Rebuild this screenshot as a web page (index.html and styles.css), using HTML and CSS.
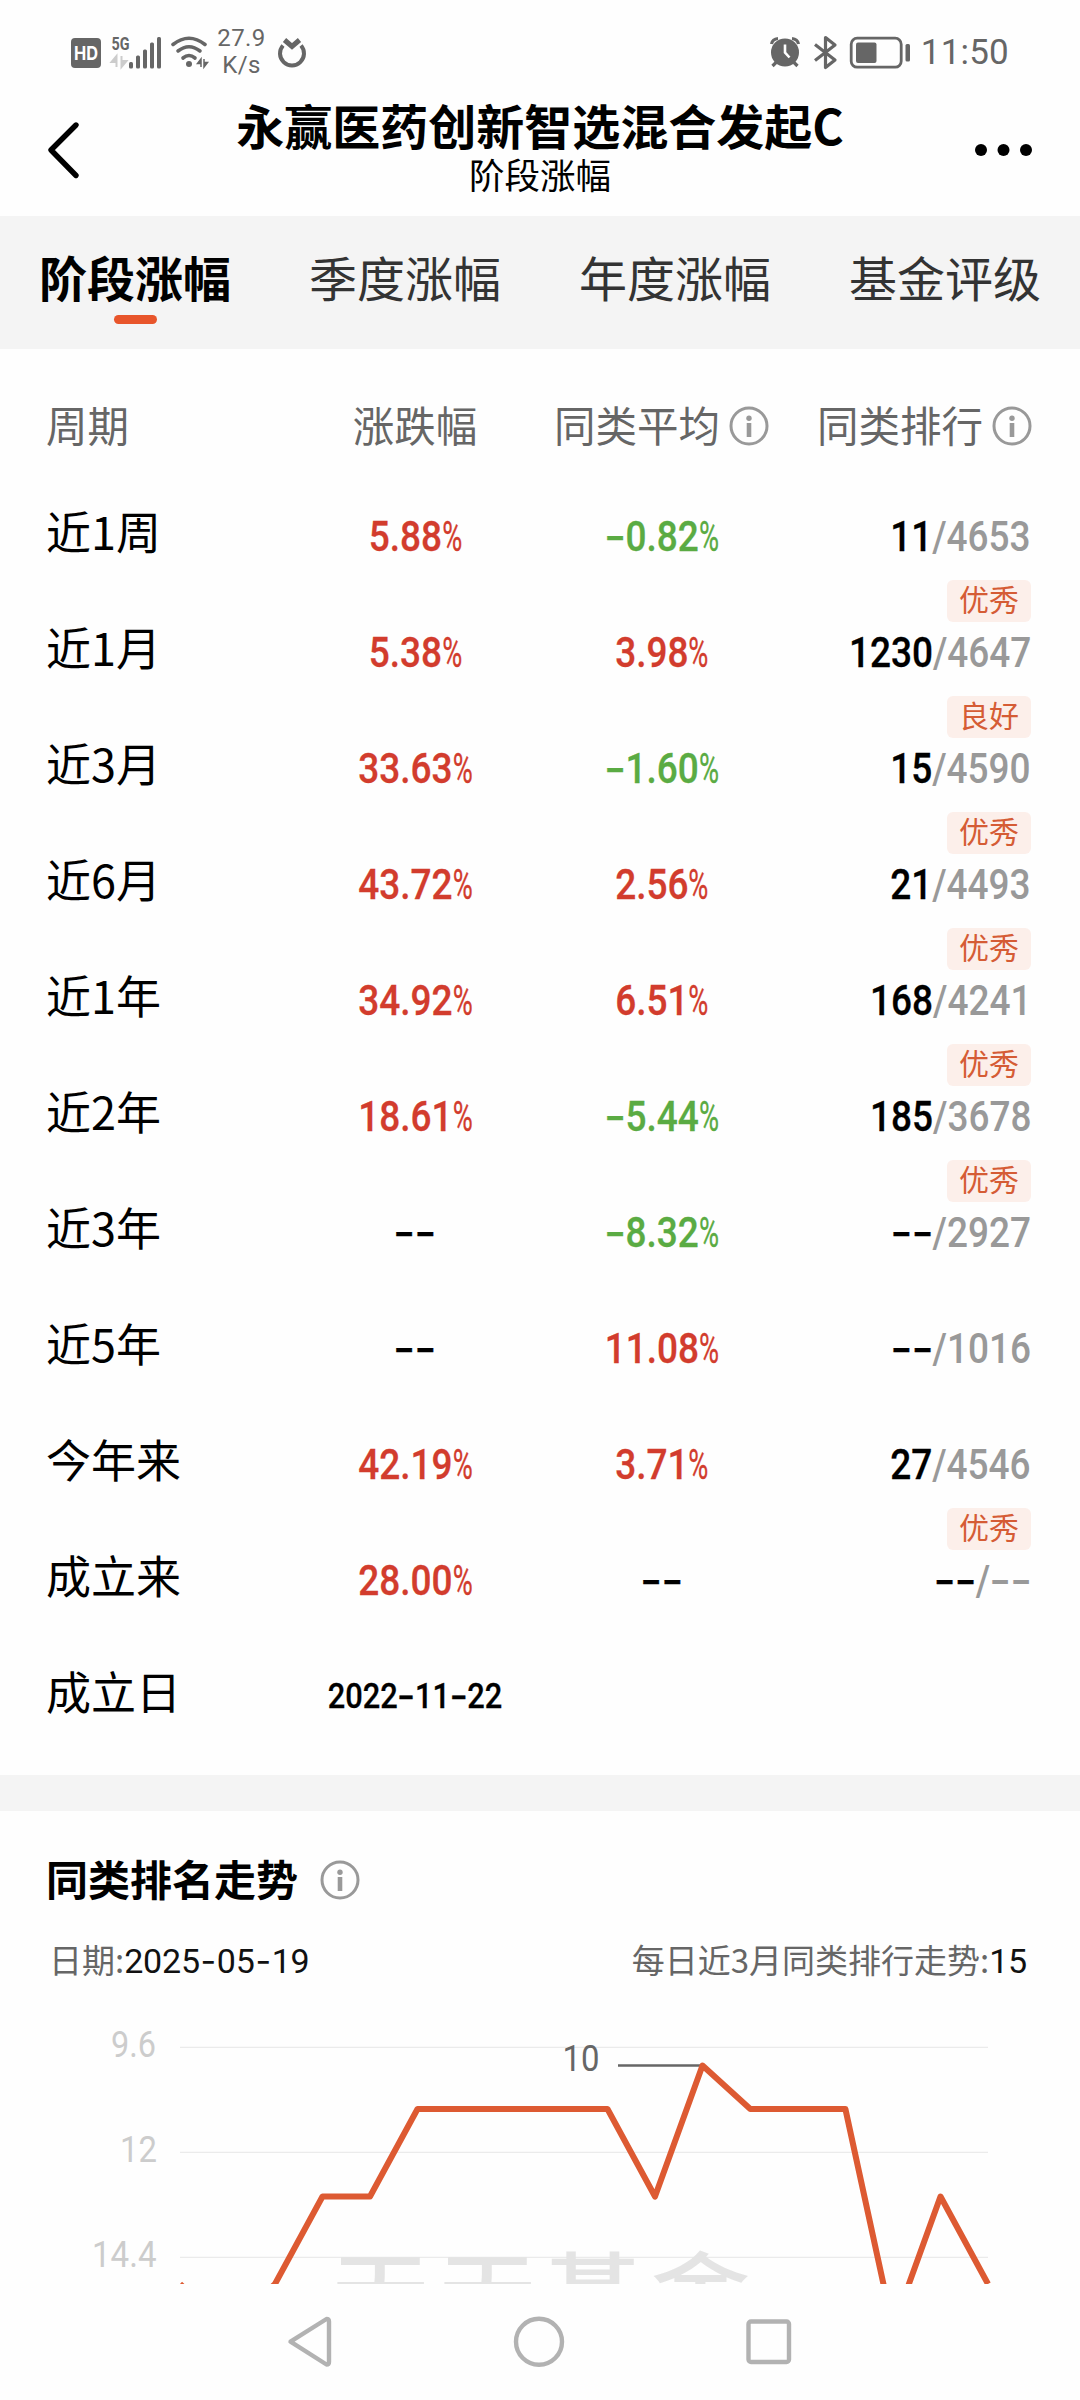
FILE: index.html
```html
<!DOCTYPE html>
<html lang="zh-CN">
<head>
<meta charset="utf-8">
<title>阶段涨幅</title>
<link rel="stylesheet" href="styles.css">
</head>
<body>
<svg class="defs" width="0" height="0" aria-hidden="true">
  <symbol id="info" viewBox="0 0 40 40">
    <circle cx="20" cy="20" r="18" fill="none" stroke="#999" stroke-width="3"/>
    <circle cx="20" cy="12.3" r="2.7" fill="#999"/>
    <path d="M20 17v14" stroke="#999" stroke-width="4.6"/>
  </symbol>
</svg>

<div class="status">
  <div class="status-left">
    <svg width="140" height="44" viewBox="70 30 140 44" fill="#666">
      <rect x="71" y="38" width="30" height="30" rx="4"/>
      <text class="hd" x="86" y="60" text-anchor="middle" textLength="24" lengthAdjust="spacingAndGlyphs">HD</text>
      <text class="g5" x="111.5" y="50" textLength="18" lengthAdjust="spacingAndGlyphs">5G</text>
      <path d="M116.500 67V56l-5 6h5M121.500 56v11l5-6h-5" fill="#ccc" stroke="#ccc" stroke-width="2"/>
      <rect x="129" y="62" width="4" height="6.500" rx="1.500"/>
      <rect x="136" y="55.500" width="4" height="13" rx="1.500"/>
      <rect x="143" y="49.500" width="4" height="19" rx="1.500"/>
      <rect x="150" y="42.500" width="4" height="26" rx="1.500"/>
      <rect x="157" y="37" width="4" height="31.500" rx="1.500"/>
      <g fill="none" stroke="#666" stroke-width="3.600" stroke-linecap="round">
        <path d="M173 44.500q16-12.500 32 0"/>
        <path d="M178 51q11-8.500 22 0"/>
        <path d="M183 58q6-5 12 0"/>
      </g>
      <circle cx="189" cy="64" r="3"/>
      <path d="M201 67v-8l-3.500 4.500h3.500M204 59v8l3.500-4.500h-3.500" stroke="#666" stroke-width="1.500"/>
    </svg>
    <div class="speed"><span>27.9</span><span>K/s</span></div>
    <svg width="30" height="44" viewBox="277 30 30 44" fill="none" stroke="#666" stroke-width="4">
      <path d="M283 45.500a12 12 0 1 0 18 0"/>
      <path d="M284.500 40l7.500 6.500 7.500-6.500" stroke-width="5"/>
    </svg>
  </div>
  <div class="status-right">
    <svg width="142" height="44" viewBox="768 30 142 44" fill="none" stroke="#666">
      <circle cx="784" cy="52.500" r="14" fill="#666" stroke="none"/>
      <path d="M770.500 44q1-5 6.500-5.500M797.500 44q-1-5-6.500-5.500M775.500 62l-4 4M792.500 62l4 4" stroke-width="3.200"/>
      <path d="M784 44.500v8l4.500 5" stroke="#fff" stroke-width="2.600"/>
      <path d="M814 44.500l20 15.500-9.500 7.500V37.500l9.500 7.500-20 15.500" stroke-width="3.200" stroke-linejoin="round"/>
      <rect x="850.200" y="38.200" width="50" height="29" rx="6" stroke-width="2.800"/>
      <rect x="855" y="42.500" width="20.500" height="20.500" rx="2" fill="#666" stroke="none"/>
      <rect x="904.500" y="44" width="4.500" height="17.500" rx="1.500" fill="#666" stroke="none"/>
    </svg>
    <span class="clock">11:50</span>
  </div>
</div>

<header class="header">
  <svg width="36" height="64" viewBox="46 118 36 64" fill="none" stroke="#000" stroke-width="5.400" stroke-linecap="round" stroke-linejoin="round"><path d="M76 125L51 150l25 25.500"/></svg>
  <div class="titles">
    <h1>永赢医药创新智选混合发起C</h1>
    <p>阶段涨幅</p>
  </div>
  <svg width="60" height="14" viewBox="973 143 60 14"><circle cx="981" cy="150" r="6"/><circle cx="1003.500" cy="150" r="6"/><circle cx="1026" cy="150" r="6"/></svg>
</header>

<nav class="tabs">
  <span class="tab active">阶段涨幅</span>
  <span class="tab">季度涨幅</span>
  <span class="tab">年度涨幅</span>
  <span class="tab">基金评级</span>
</nav>

<section class="table">
  <div class="row head">
    <span>周期</span><span class="mid">涨跌幅</span>
    <span class="mid with-icon">同类平均<svg width="40" height="40"><use href="#info"/></svg></span>
    <span class="end with-icon">同类排行<svg width="40" height="40"><use href="#info"/></svg></span>
  </div>
  <div class="row"><span class="label">近1周</span><span class="num up">5.88<i>%</i></span><span class="num down"><b>-</b>0.82<i>%</i></span><div class="rank"><span class="num">11<em>/4653</em></span><span class="tag">优秀</span></div></div>
  <div class="row"><span class="label">近1月</span><span class="num up">5.38<i>%</i></span><span class="num up">3.98<i>%</i></span><div class="rank"><span class="num">1230<em>/4647</em></span><span class="tag">良好</span></div></div>
  <div class="row"><span class="label">近3月</span><span class="num up">33.63<i>%</i></span><span class="num down"><b>-</b>1.60<i>%</i></span><div class="rank"><span class="num">15<em>/4590</em></span><span class="tag">优秀</span></div></div>
  <div class="row"><span class="label">近6月</span><span class="num up">43.72<i>%</i></span><span class="num up">2.56<i>%</i></span><div class="rank"><span class="num">21<em>/4493</em></span><span class="tag">优秀</span></div></div>
  <div class="row"><span class="label">近1年</span><span class="num up">34.92<i>%</i></span><span class="num up">6.51<i>%</i></span><div class="rank"><span class="num">168<em>/4241</em></span><span class="tag">优秀</span></div></div>
  <div class="row"><span class="label">近2年</span><span class="num up">18.61<i>%</i></span><span class="num down"><b>-</b>5.44<i>%</i></span><div class="rank"><span class="num">185<em>/3678</em></span><span class="tag">优秀</span></div></div>
  <div class="row"><span class="label">近3年</span><span class="num"><b>-</b><b>-</b></span><span class="num down"><b>-</b>8.32<i>%</i></span><div class="rank"><span class="num"><b>-</b><b>-</b><em>/2927</em></span></div></div>
  <div class="row"><span class="label">近5年</span><span class="num"><b>-</b><b>-</b></span><span class="num up">11.08<i>%</i></span><div class="rank"><span class="num"><b>-</b><b>-</b><em>/1016</em></span></div></div>
  <div class="row"><span class="label">今年来</span><span class="num up">42.19<i>%</i></span><span class="num up">3.71<i>%</i></span><div class="rank"><span class="num">27<em>/4546</em></span><span class="tag">优秀</span></div></div>
  <div class="row"><span class="label">成立来</span><span class="num up">28.00<i>%</i></span><span class="num"><b>-</b><b>-</b></span><div class="rank"><span class="num"><b>-</b><b>-</b><em>/<b>-</b><b>-</b></em></span></div></div>
  <div class="row last"><span class="label">成立日</span><span class="num date">2022<b>-</b>11<b>-</b>22</span></div>
</section>

<section class="trend">
  <h2>同类排名走势<svg width="40" height="40"><use href="#info"/></svg></h2>
  <div class="meta">
    <span>日期:<span class="val">2025<b>-</b>05<b>-</b>19</span></span>
    <span>每日近3月同类排行走势:<span class="val">15</span></span>
  </div>
  <svg class="chart" width="1080" height="284" viewBox="0 2000 1080 284">
    <path d="M180 2047.300H988M180 2152.300H988M180 2257.300H988" stroke="#ebebeb" stroke-width="1.300"/>
    <g class="mark" transform="translate(331 2319) scale(1.240 1)">
      <text x="0" y="0">天</text><text x="86.300" y="0">天</text><text x="171" y="0">基</text><text x="258" y="0">金</text>
    </g>
    <g class="axis">
      <text x="111" y="2057" textLength="45" lengthAdjust="spacingAndGlyphs">9.6</text>
      <text x="120" y="2162" textLength="37" lengthAdjust="spacingAndGlyphs">12</text>
      <text x="92" y="2267" textLength="64.500" lengthAdjust="spacingAndGlyphs">14.4</text>
      <text class="peak" x="562.500" y="2071" textLength="37" lengthAdjust="spacingAndGlyphs">10</text>
    </g>
    <path d="M618 2065.500H702" stroke="#666" stroke-width="2.600"/>
    <path d="M180 2284L227.500 2328L275 2284L322.500 2196.500H370L417.500 2109H607.500L655 2196.500L702.500 2065.500L750.300 2109H845.400L893 2328L940.500 2196.500L988 2284" fill="none" stroke="#dd5a32" stroke-width="6" stroke-linejoin="round"/>
  </svg>
</section>

<footer class="softkeys">
  <svg width="48" height="54" viewBox="285 2315 48 54"><path d="M289.500 2341.700L325.500 2319q2.500 0 2.500 2.500v40.500q0 2.500-2.500 2.500z"/></svg>
  <svg width="54" height="54" viewBox="513 2315 54 54"><circle cx="540" cy="2341.700" r="23"/></svg>
  <svg width="50" height="54" viewBox="744 2315 50 54"><rect x="748.500" y="2321.500" width="40.500" height="40.500" rx="2.500"/></svg>
</footer>
</body>
</html>
```

FILE: styles.css
```css
* { box-sizing: border-box; }
body {
  margin: 0;
  width: 1080px;
  height: 2400px;
  overflow: hidden;
  background: #fefefe;
  color: #000;
  font-family: "Noto Sans CJK SC", sans-serif;
}
.defs { display: block; }
h1, h2, p { margin: 0; }

.status {
  height: 98px;
  padding: 30px 71px 0 70px;
  display: flex;
  justify-content: space-between;
  align-items: flex-start;
  color: #666;
  font-family: Roboto, sans-serif;
}
.status-left, .status-right { display: flex; align-items: flex-start; }
.hd { fill: #fff; font: 700 19px Inter, sans-serif; }
.g5 { font: 700 19px Roboto, sans-serif; }
.speed {
  width: 63px;
  margin-right: 4px;
  display: flex;
  flex-direction: column;
  align-items: center;
  font-size: 24px;
  line-height: 27px;
  letter-spacing: .4px;
  margin-top: -5px;
}
.clock { font-size: 35px; line-height: 45px; margin-left: 10px; letter-spacing: .2px; }

.header {
  height: 118px;
  padding: 0 47px 0 46px;
  display: flex;
  justify-content: space-between;
}
.header > svg { margin-top: 20px; }
.header > svg:last-child { margin-top: 45px; }
.titles { text-align: center; padding-left: 25px; }
h1 { font-size: 48px; line-height: 52px; font-weight: 700; white-space: nowrap; }
.titles p { font-size: 35.5px; line-height: 48px; }

.tabs {
  height: 133px;
  background: #f4f4f4;
  display: grid;
  grid-template-columns: repeat(4, 1fr);
}
.tab {
  display: flex;
  flex-direction: column;
  align-items: center;
  padding-top: 27px;
  font-size: 48px;
  line-height: 66px;
  color: #333;
}
.tab.active { color: #000; font-weight: 700; }
.tab.active::after {
  content: "";
  width: 43px;
  height: 9px;
  margin-top: 6px;
  border-radius: 5px;
  background: #e8552b;
}

.table { height: 1426px; }
.row {
  display: grid;
  grid-template-columns: 246px 246px 247px 1fr;
  height: 116px;
  padding: 0 48px 0 46px;
  align-items: start;
}
.row.head {
  height: 157px;
  padding-top: 48px;
  font-size: 41.5px;
  line-height: 54px;
  color: #666;
}
.mid { text-align: center; }
.with-icon { display: flex; align-items: center; justify-content: center; }
.with-icon svg { margin: 4px 0 0 9px; }
.end.with-icon { justify-content: flex-end; }
.row.last { height: 109px; }
.label { font-size: 45px; line-height: 49px; }
.num {
  font: 500 42px/62px Roboto, sans-serif;
  text-align: center;
  transform: scaleX(.88);
  white-space: nowrap;
  -webkit-text-stroke: .3px currentColor;
}
.num i {
  display: inline-block;
  width: .52em;
  font-style: normal;
  font-weight: 400;
  transform: scaleX(.74);
  transform-origin: left;
}
.num b, .val b {
  display: inline-block;
  width: .56em;
  font-family: Inter, sans-serif;
  font-weight: inherit;
  line-height: 1;
  text-align: center;
  transform: scaleX(1.3);
}
.num em { font-style: normal; color: #999; -webkit-text-stroke: 0; }
.num.date { font-size: 35px; }
.up { color: #d23c2d; }
.down { color: #5aab43; }
.rank { display: flex; flex-direction: column; align-items: flex-end; gap: 12px; }
.rank .num { transform-origin: right; margin-right: 1px; }
.tag {
  width: 84px;
  height: 42px;
  margin-right: 1px;
  border-radius: 6px;
  background: #fcefea;
  color: #d55c35;
  font-size: 30px;
  line-height: 37px;
  text-align: center;
}

.trend { border-top: 36px solid #f4f4f4; }
h2 {
  display: flex;
  align-items: center;
  gap: 22px;
  padding: 37px 0 0 46px;
  font-size: 42px;
  line-height: 60px;
}
h2 svg { margin-top: 3px; }
.meta {
  display: flex;
  justify-content: space-between;
  padding: 27px 53px 0 49px;
  font-size: 33px;
  line-height: 48px;
  color: #666;
}
.val { font-family: Roboto, sans-serif; font-size: 34px; color: #111; letter-spacing: -.2px; }
.val b { width: .5em; transform: none; }
.chart { display: block; margin-top: 15px; }
.axis { font: 400 36px Roboto, sans-serif; fill: #ccc; }
.peak { fill: #666; }
.mark { font: 500 80px "Noto Sans CJK SC", sans-serif; fill: #e4e4e4; }

.softkeys {
  height: 116px;
  display: flex;
  justify-content: center;
  align-items: center;
  gap: 178px;
}
.softkeys svg { fill: none; stroke: #b2b2b2; stroke-width: 4.4px; stroke-linejoin: round; }
```
